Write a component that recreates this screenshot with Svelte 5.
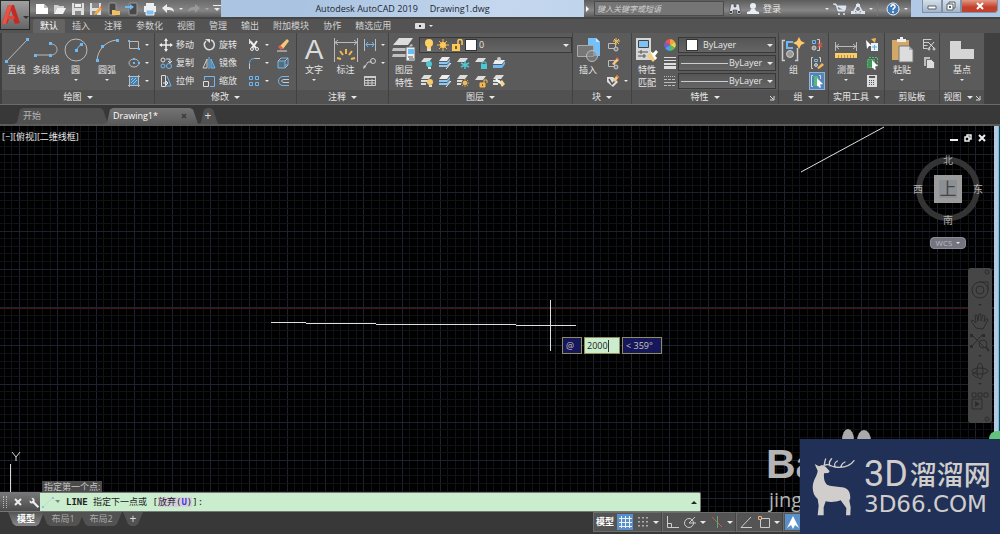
<script lang="ts">
  const icons: Record<string, string> = {
    // quick access bar
    fresh: '<path d="M1 2h8l4 4v6H1z" fill="#fff"/><path d="M9 2v4h4" fill="#bbb"/>',
    open: '<path d="M1 12V3h4l1 1h5v2H4z" fill="#d0d0d0"/><path d="M4 6h9l-3 6H1z" fill="#f2f2f2"/>',
    save: '<path d="M1 1h12v12H1z" fill="#dedede"/><path d="M3 1h8v5H3zM4 9h6v4H4z" fill="#888"/><path d="M4 2h6v3H4z" fill="#eee"/>',
    saveas: '<path d="M1 1h11v12H1z" fill="#dedede"/><path d="M3 1h7v5H3zM3 9h5v4H3z" fill="#888"/><path d="m5 13 1-3 5-5 2 2-5 5z" fill="#f0a848"/><path d="m11 5 1-1 2 2-1 1z" fill="#e65a3d"/>',
    phone: '<rect x="2" y="1" width="7" height="12" rx="1" fill="#494949" stroke="#999"/><path d="M5 8h3l1 1h4v4H5z" fill="#f2c063"/>',
    mobile: '<rect x="4" y="1" width="8" height="12" rx="1" fill="#494949" stroke="#999"/><path d="M0 4h5V2l4 3-4 3V6H0z" fill="#6cb9f5"/>',
    print: '<path d="M3 1h8v3H3zM1 4h12v6H1z" fill="#eee"/><path d="M3 8h8v5H3z" fill="#7cc1f5" stroke="#eee"/>',
    undo: '<path d="M1 6l5-4v3c4 0 7 1 7 5-2-2-4-2-7-2v3z" fill="#ececec"/>',
    redo: '<path d="M13 6L8 2v3c-4 0-7 1-7 5 2-2 4-2 7-2v3z" fill="#999"/>',
    find: '<path d="M3 2h3v3h2V2h3l2 10H9V8H5v4H1z" fill="#dde4ec" stroke="#333" stroke-width=".5"/><path d="M2 9h2v2H2zM10 9h2v2h-2z" fill="#444"/>',
    user: '<circle cx="7" cy="4" r="3" fill="#e8eef5"/><path d="M5 7h4l1 2 3 1v2H1v-2l3-1z" fill="#e8eef5"/>',
    cart: '<path d="M0 2h3l2 7h7M4 4h9l-1 4H5z" fill="#dce6f2" stroke="#dce6f2"/><circle cx="6" cy="12" r="1" fill="#dce6f2"/><circle cx="11" cy="12" r="1" fill="#dce6f2"/>',
    exchange: '<path d="M7 2L12 11H2zM4 8l3 2 3-2" fill="none" stroke="#dce6f2" stroke-width="1.500"/><path d="M5 2h4v3H5zM0 9h4v3H0zM10 9h4v3h-4z" fill="#dce6f2"/>',
    help: '<circle cx="7" cy="7" r="6" fill="#4279b7" stroke="#e9f2fb"/><path d="M5 5c0-3 4-3 4 0 0 1-2 1-2 3M7 9v2" fill="none" stroke="#fff" stroke-width="1.500"/>',
    // draw
    line: '<path d="M2 25L24 2" stroke="#bbb"/><path d="M1 23h3v3H1zM22 1h3v3h-3z" fill="#6cb9f5"/>',
    pline: '<path d="M3 18H18c8 0 8-11 0-11" fill="none" stroke="#bbb"/><path d="M1 17h3v3H1zM16 17h3v3h-3zM16 5h3v3h-3z" fill="#6cb9f5"/>',
    circle: '<circle cx="13" cy="13" r="11" fill="none" stroke="#bbb"/><path d="M13 13l5-6" stroke="#6cb9f5"/><path d="M12 12h3v3h-3zM17 6h3v3h-3z" fill="#6cb9f5"/>',
    arc: '<path d="M3 23C4 12 12 4 23 3" fill="none" stroke="#bbb"/><path d="M2 22h3v3H2zM7 8h3v3H7zM22 2h3v3h-3z" fill="#6cb9f5"/>',
    rect: '<path d="M2.500 3.500h9v7h-9z" fill="none" stroke="#bbb"/><path d="M1 2h2v2H1zM11 10h2v2h-2z" fill="#6cb9f5"/>',
    ellipse: '<ellipse cx="7" cy="7" rx="5" ry="4" fill="none" stroke="#bbb"/><path d="M6 6h2v2H6zM6 2h2v2H6zM11 6h2v2h-2z" fill="#6cb9f5"/>',
    hatch: '<path d="M3 3h8v8H3z" fill="#477fab"/><path d="M4 6l2-2M4 9l5-5M6 10l4-4" stroke="#8ec5ee"/><path d="M2.500 1v12M11.500 1v12M1 2.500h12M1 11.500h12" stroke="#bbb"/>',
    // modify
    move: '<path d="M7 1v12M1 7h12" stroke="#eee" stroke-width="1.500"/><path d="M7 0l2 3H5zM7 14l2-3H5zM0 7l3-2v4zM14 7l-3-2v4z" fill="#eee"/>',
    rotate: '<path d="M9 2a5 5 0 1 1-5 1" fill="none" stroke="#ddd" stroke-width="1.500"/><path d="M3 1h5v4z" fill="#ddd"/>',
    copy: '<circle cx="4" cy="4" r="2" fill="none" stroke="#ddd"/><circle cx="4" cy="10" r="2" fill="none" stroke="#6cb9f5"/><circle cx="10" cy="10" r="2.500" fill="none" stroke="#6cb9f5"/><path d="M7 3h4v3M9 5l2 2 2-2" fill="none" stroke="#ddd"/>',
    mirror: '<path d="M5 3v9H1z" fill="none" stroke="#ccc"/><path d="M9 3v9h4z" fill="#477fab" stroke="#6cb9f5"/><path d="M7 1v12" stroke="#6cb9f5"/>',
    stretch: '<path d="M2.500 1.500h4v11h-4z" fill="none" stroke="#ddd"/><path d="M8 2l4 10H7" fill="none" stroke="#6cb9f5"/><path d="M4 9h5M7 7l2 2-2 2" fill="none" stroke="#eee"/>',
    scale: '<path d="M2.500 6V2.500h10v10H8" fill="none" stroke="#6cb9f5"/><path d="M1.500 7.500h5v5h-5z" fill="none" stroke="#ddd"/>',
    trim: '<path d="M3 3l6 7M10 3L5 10" stroke="#eee" stroke-width="2"/><path d="M2.500 1v5" stroke="#ddd"/><circle cx="10" cy="11" r="1.500" fill="none" stroke="#eee"/><circle cx="5" cy="11" r="1.500" fill="none" stroke="#eee"/>',
    fillet: '<path d="M2.500 13V8" stroke="#ccc"/><path d="M2.500 8c0-4 2-5.500 5.500-5.500" fill="none" stroke="#6cb9f5"/><path d="M8 2.500h5" stroke="#ccc"/>',
    array: '<path d="M2.500 2.500h3v3h-3zM8.500 2.500h3v3h-3zM2.500 8.500h3v3h-3zM8.500 8.500h3v3h-3z" fill="none" stroke="#6cb9f5"/>',
    erase: '<path d="M4 8l7-7 2 2-6 8z" fill="#f5c978"/><path d="M2 9l2-2 3 3-2 2z" fill="#e85d4a"/><path d="M1 13h10" stroke="#ddd"/>',
    box: '<path d="M5 2h7v7H9" fill="none" stroke="#6cb9f5"/><path d="M2 5h7v7H2z" fill="#596c79" stroke="#6cb9f5"/><path d="M2 5l3-3M9 5l3-3M9 12l3-3" stroke="#bbb" fill="none"/>',
    offset: '<path d="M13 2.500H7c-6 0-6 9 0 9h6" fill="none" stroke="#6cb9f5"/><path d="M13 5.500H8c-3 0-3 3 0 3h5" fill="none" stroke="#ccc"/>',
    // annotation
    dim: '<path d="M1.500 1v24M24.500 1v24M2 5.500h22M5 3L2 5.500 5 8M21 3l3 2.500L21 8" fill="none" stroke="#bbb"/><path d="M13 12v5M7 14l3 4M19 14l-3 4M4 21l4 1M22 21l-4 1" stroke="#f2b850" stroke-width="2"/>',
    linear: '<path d="M1.500 1v12M12.500 1v12" stroke="#bbb"/><path d="M3 6.500h8M5 4L3 6.500 5 9M9 4l2 2.500L9 9" fill="none" stroke="#6cb9f5"/>',
    leader: '<path d="M1 12l4-6h4" fill="none" stroke="#ccc"/><circle cx="10" cy="5" r="2.500" fill="none" stroke="#ccc"/><path d="M0 13l1-4 2 2z" fill="#ccc"/>',
    table: '<path d="M1.500 2.500h11v9h-11zM1 6.500h12M1 9h12M5 5v7M9 5v7" fill="none" stroke="#ccc"/><path d="M1 2h12v2H1z" fill="#ccc"/>',
    // layers
    layers: '<path d="M8 1h14l-5 7H2z" fill="#ddd"/><path d="M2 11h15l3-4 2 1-5 6H1zM2 17h15l2-3 2 1-4 5H1z" fill="#c0c0c0"/><path d="M15 10h9v14h-9z" fill="#eee" stroke="#666"/><path d="M17 12h6v5h-6z" fill="#69bdf8"/><path d="M17 20h5M18 22h5" stroke="#555"/>',
    lay1: '<path d="M4 2h8L9 6H1z" fill="#ddd"/><circle cx="9" cy="8" r="3" fill="#4cc8d8"/><path d="M8 11h3v2H8z" fill="#ddd"/>',
    lay2: '<path d="M4 1h8L9 5H1z" fill="#eee"/><path d="M1 6h8l3-3v2L9 8H1zM1 9h8l3-3v2l-3 3H1z" fill="#8cc8f4"/><path d="M8 13l5-6" stroke="#eee"/>',
    lay3: '<path d="M4 2h8L9 6H1z" fill="#ddd"/><path d="M9 5v8M5 7l8 4M13 7l-8 4" stroke="#4cc8d8" stroke-width="1.500"/>',
    lay4: '<path d="M4 2h8L9 6H1z" fill="#ddd"/><path d="M7 8h6v5H7z" fill="#4cc8d8"/><path d="M8 8V6h4v2" fill="none" stroke="#4cc8d8"/>',
    lay5: '<path d="M3 4h10l-3 4H1z" fill="#eee"/><path d="M1 9h9l3-4v3l-3 4H1z" fill="#6cb9f5"/><circle cx="7" cy="3" r="2" fill="#ccc"/>',
    lay6: '<path d="M4 1h8L9 5H1zM1 6h7v2H1zM1 9h5v2H1z" fill="#ddd"/><circle cx="10" cy="8" r="3" fill="#f7ca67"/><path d="M9 11h3v2H9z" fill="#ddd"/>',
    lay8: '<path d="M4 1h8L9 5H1zM1 6h5v2H1zM1 9h4v2H1z" fill="#ddd"/><circle cx="9" cy="9" r="2" fill="#f7ca67"/><path d="M9 5v8M5 9h8M6 6l6 6M12 6l-6 6" stroke="#f2b850" stroke-width=".7"/>',
    lay9: '<path d="M4 2h8L9 6H1z" fill="#ddd"/><path d="M6 9h5v4H6z" fill="#f7b84c" stroke="#f7b84c"/><path d="M10 9V6h3v3" fill="none" stroke="#f7b84c"/><path d="M8 10h1v2H8z" fill="#7a5e24"/>',
    lay10: '<path d="M4 1h8L9 5H1zM1 6h7v2H1zM1 9h5v2H1z" fill="#ddd"/><path d="M7 8l3-2 3 4-3 3z" fill="#f4d79a"/><path d="M4 5l4 4" stroke="#fff" stroke-width="2"/>',
    bulb: '<circle cx="7" cy="5" r="4" fill="#ffd166"/><path d="M5 8h4v3H5z" fill="#ffd166"/><path d="M5 12h4" stroke="#ddd" stroke-width="2"/>',
    sun: '<path d="M7 1v12M1 7h12M3 3l8 8M11 3l-8 8" stroke="#f2b850"/><circle cx="7" cy="7" r="3" fill="#ffc95a"/>',
    unlock: '<path d="M2 6h8v7H2z" fill="#ffc95a"/><path d="M8 6V3c0-2 4-2 4 0v4" fill="none" stroke="#ffc95a" stroke-width="1.500"/><path d="M5 8h2v3H5z" fill="#7a5e24"/>',
    // block
    insert: '<path d="M13 1h8l4 4v14H13z" fill="#74c0fa"/><path d="M21 1v4h4" fill="#c3e4ff"/><path d="M2.500 8.500h16v11h-16z" fill="#777" stroke="#aaa"/><circle cx="17" cy="19" r="5.500" fill="#8888" stroke="#bbb"/>',
    blk1: '<path d="M2.500 5.500h7v5h-7z" fill="none" stroke="#bbb"/><circle cx="10" cy="11" r="2" fill="#777" stroke="#ccc"/><path d="M10 0v7M7 3h7M8 1l5 5M13 1L8 6" stroke="#f7c262"/>',
    blk2: '<path d="M2.500 4.500h6v6h-6z" fill="none" stroke="#bbb"/><circle cx="10" cy="11" r="2" fill="#777" stroke="#ccc"/><path d="M6 8l5-6 2 2-5 5z" fill="#f5c978"/><path d="M10 2l1-1 2 2-1 1z" fill="#e85d4a"/>',
    blk3: '<path d="M1 3h6l5 5-5 5-6-5z" fill="#ddd"/><path d="M3 5l3 5 3-3" fill="none" stroke="#555" stroke-width="1.500"/><path d="M7 6l4-5 2 2-4 5z" fill="#f5c978"/><path d="M10 2l1-1 2 2-1 1z" fill="#e85d4a"/>',
    // properties
    match: '<path d="M2 1h15v22H2z" fill="#d6d6d6"/><path d="M4.500 3.500h10v7h-10z" fill="#7cc4f7" stroke="#444"/><path d="M4 15h10M4 19h8M7 13v4M10 17v4" stroke="#555"/><path d="M13 19l4-4 6 6-4 4z" fill="#f3cf7d"/><path d="M16 14l3 2 3-3 2 2-3 4 2 2-2 2z" fill="#fff"/>',
    wheel: '<path d="M7 7V1a6 6 0 0 1 5 3z" fill="#f7a13b"/><path d="M7 7l5-3a6 6 0 0 1 0 6z" fill="#e9d44a"/><path d="M7 7l5 3a6 6 0 0 1-5 3z" fill="#59b95f"/><path d="M7 7v6a6 6 0 0 1-5-3z" fill="#42a5e8"/><path d="M7 7l-5 3a6 6 0 0 1 0-6z" fill="#7562c9"/><path d="M7 7L2 4a6 6 0 0 1 5-3z" fill="#e8515d"/>',
    weight: '<path d="M1 1.500h12M1 4.500h12" stroke="#ddd"/><path d="M1 8h12" stroke="#ddd" stroke-width="2"/><path d="M1 11.500h12" stroke="#ddd" stroke-width="3"/>',
    ltype: '<path d="M1 2.500h12" stroke="#bbb" stroke-dasharray="1 1"/><path d="M1 5.500h12M1 11.500h12" stroke="#bbb" stroke-dasharray="3 1"/><path d="M1 8.500h12" stroke="#bbb"/>',
    // group, utilities, clipboard, view
    group: '<path d="M4 3.500H1.500v20H4M14 23.500h2.500V11" fill="none" stroke="#ccc" stroke-width="1.500"/><path d="M12 5H6v6h6" fill="none" stroke="#6cb9f5" stroke-width="2"/><circle cx="9" cy="17" r="3.500" fill="#999" stroke="#ccc"/><path d="M18 0l2 4 4 2-4 2-2 4-2-4-4-2 4-2z" fill="#ffc96b"/>',
    grp1: '<path d="M2.500 2.500h3v3h-3z" fill="none" stroke="#6cb9f5"/><circle cx="4" cy="10" r="2" fill="#999" stroke="#ccc"/><path d="M7 1.500h2.500v11H7" fill="none" stroke="#ccc"/><path d="M8 5l4 4M12 5L8 9" stroke="#e84f45" stroke-width="1.500"/>',
    grp2: '<path d="M3 1.500H1.500v11H3M9 1.500h1.500V6" fill="none" stroke="#ccc"/><path d="M4.500 3.500h3v2h-3z" fill="none" stroke="#6cb9f5"/><circle cx="6" cy="9" r="1.500" fill="#999" stroke="#ccc"/><path d="M7 12l5-5 2 2-5 4z" fill="#f5b65c"/>',
    grp3: '<path d="M3 1.500H1.500v11H3M9 1.500h1.500V5" fill="none" stroke="#ddd"/><path d="M4 2h4v10H4z" fill="#53b981"/><path d="M7 4l6 6-3 .5 1 3h-2l-1-2-1 1z" fill="#fff"/>',
    measure: '<path d="M2.500 5v9M23.500 5v9M3 9.500h20M6 7L3 9.500 6 12M20 7l3 2.500-3 2.500" fill="none" stroke="#bbb"/><path d="M2 16h22v5H2z" fill="#f8cd6a"/><path d="M5.500 18v3M8.500 18v3M11.500 18v3M14.500 18v3M17.500 18v3M20.500 18v3" stroke="#b4914a"/>',
    ut1: '<path d="M6 5h7v8H6z" fill="#e8f2fa"/><path d="M7 9h5M9.500 7v5" stroke="#5caee9"/><path d="M1 2l6 6H4l-2 3z" fill="#fff"/><path d="M6 1l5-1-1 5z" fill="#f5b850"/>',
    ut2: '<path d="M4 1.500h8.500V10" fill="none" stroke="#55bf72" stroke-dasharray="2 1"/><path d="M2.500 3.500h7v8h-7z" fill="#3e9557" stroke="#55bf72" stroke-dasharray="2 1"/><path d="M7 4l6 6-3 .5 1 3H9l-1-2-1 1z" fill="#fff"/>',
    calc: '<path d="M2 1h10v12H2z" fill="#ddd"/><path d="M4 3h6" stroke="#555" stroke-width="2"/><path d="M4 6.500h6M4 8.500h6M4 10.500h6" stroke="#555" stroke-dasharray="1 1"/>',
    paste: '<path d="M3 3h17v20H3z" fill="#d3a768"/><path d="M8 5V2h3V0h3v2h3v3z" fill="#eee"/><path d="M10 9h10l4 4v12H10z" fill="#ddd" stroke="#777"/><path d="M20 9v4h4" fill="#aaa"/>',
    cut: '<path d="M1.500 1.500h8M1.500 4.500h5M1.500 7.500h4M1.500 10.500h4M1.500 1v10" stroke="#ccc"/><path d="M6 4l6 6M12 4L7 10" stroke="#ddd"/><circle cx="12" cy="11" r="1" fill="none" stroke="#ddd"/><circle cx="7" cy="11" r="1" fill="none" stroke="#ddd"/>',
    clip: '<path d="M2 1h6v9H2z" fill="#bbb"/><path d="M4.500 3.500h5l3 3v6h-8z" fill="#ddd" stroke="#666"/>',
    base: '<path d="M1 4h11v8h13v10H1z" fill="#d5d5d5"/>',
    // status bar
    grid: '<path d="M3.500 1v12M7.500 1v12M11.500 1v12M1 3.500h13M1 7.500h13M1 11.500h13" stroke="#e6f1fa"/>',
    dots: '<path d="M3 2v10M7 2v10M11 2v10" stroke="#ccc" stroke-width="1.500" stroke-dasharray="1.500 2.500"/>',
    ortho: '<path d="M2.500 1v11.500H14M2 8.500h4.500V12" fill="none" stroke="#ccc"/>',
    polar: '<circle cx="6" cy="8" r="4.500" fill="none" stroke="#ccc"/><path d="M6 8l6-6M6 8h7" stroke="#ccc"/>',
    iso: '<path d="M2 2l10 10" stroke="#cf5b55"/><path d="M7.500 1v12" stroke="#58ad70"/>',
    angle: '<path d="M12 2L2 12.500h11" fill="none" stroke="#ccc"/>',
    osnap: '<path d="M3.500 3.500h9v9h-9z" fill="none" stroke="#ccc"/><path d="M1.500 1.500h3v3h-3z" fill="#5b5b5b" stroke="#e8b084"/>',
    person: '<path d="M7 1l2 4 4 8-4-3-2 4-2-4-4 3 4-8z" fill="#fff"/>',
    wrench: '<path d="M3 1l2 3-2 2-2-2c-1 3 1 5 4 4l6 6 2-2-6-6c1-3-1-5-4-5z" fill="#eee"/>',
  };

  const menus = ["默认", "插入", "注释", "参数化", "视图", "管理", "输出", "附加模块", "协作", "精选应用"];
  const drawTools = [
    { icon: "line", label: "直线", cls: "w29", more: false },
    { icon: "pline", label: "多段线", cls: "w30", more: false },
    { icon: "circle", label: "圆", cls: "w29", more: true },
    { icon: "arc", label: "圆弧", cls: "w34", more: true },
  ];
  const modifyTools = [
    ["move", "移动"], ["rotate", "旋转"],
    ["copy", "复制"], ["mirror", "镜像"],
    ["stretch", "拉伸"], ["scale", "缩放"],
  ];
  const layerTools = ["lay1", "lay2", "lay3", "lay4", "lay5", "lay6", "lay2", "lay8", "lay9", "lay10"];
  const quick = ["fresh", "open", "save", "saveas", "phone", "mobile", "print"];

  // drawing grid: one heavy line for every five light ones
  const step = 7.65;
  const cols = Array.from({ length: 320 }, (_, i) => ({ at: Math.round(19 + step * (i - 2)) + 0.5, major: (i - 2) % 5 === 0 }));
  const rows = Array.from({ length: 180 }, (_, i) => ({ at: Math.round(28 + step * (i - 3)) + 0.5, major: (i - 3) % 5 === 0 }));

  let search = $state("");
  let command = $state("");
  let distance = $state("2000");
  let angle = $state("< 359°");
</script>

{#snippet icon(name: string, size = 14)}
  <svg class="icon" width={size} height={size} viewBox="0 0 {size} {size}" aria-hidden="true">{@html icons[name]}</svg>
{/snippet}

{#snippet big(name: string, label: string, cls: string, more = false)}
  <button class="big {cls}">
    {@render icon(name, 26)}
    <span>{label}</span>
    {#if more}<i class="arrow small"></i>{/if}
  </button>
{/snippet}

{#snippet stack(names: string[], arrows: boolean[] = [])}
  <div class="stack">
    {#each names as name, i}
      <button class="tool" class:picked={name === "grp3"} aria-label={name}>
        {@render icon(name)}
        {#if arrows[i]}<i class="arrow small"></i>{/if}
      </button>
    {/each}
  </div>
{/snippet}

{#snippet panelTitle(label: string, arrow = true, corner = false)}
  <button class="panel-title">
    {label}
    {#if arrow}<i class="arrow"></i>{/if}
    {#if corner}<svg class="corner" width="6" height="6" viewBox="0 0 6 6"><path d="M1 1l3 3M5 1v4H1" fill="none" stroke="#ddd" /></svg>{/if}
  </button>
{/snippet}

<div class="app">
  <header class="titlebar">
    <button class="logo" aria-label="AutoCAD">
      <svg width="20" height="22" viewBox="0 0 20 22">
        <path d="M1 20L7 1h6l6 18-5 1-2-5H8l-2 5z" fill="#c22a26" />
        <path d="M7 1h4L5 20H1z" fill="#e65246" />
        <path d="M10 6l2 6H8z" fill="#8a8a8a" />
        <path d="M7 12h6l1 3H6z" fill="#e04237" />
      </svg>
      <i class="arrow"></i>
    </button>
    <div class="quick">
      {#each quick as name}
        <button aria-label={name}>{@render icon(name)}</button>
      {/each}
      <button class="drop" aria-label="undo">{@render icon("undo")}<i class="arrow small"></i></button>
      <button class="drop dim" aria-label="redo">{@render icon("redo")}<i class="arrow small"></i></button>
      <button class="custom" aria-label="customize"><i class="arrow"></i></button>
    </div>
    <h1><span>Autodesk AutoCAD 2019</span><span>Drawing1.dwg</span></h1>
    <div class="infobar">
      <button class="expand" aria-label="expand"><i class="arrow right"></i></button>
      <input type="search" bind:value={search} placeholder="键入关键字或短语" aria-label="键入关键字或短语" />
      <button aria-label="find">{@render icon("find")}</button>
      <button class="login">{@render icon("user")}<span>登录</span><i class="arrow small"></i></button>
      <button aria-label="cart">{@render icon("cart")}</button>
      <button class="drop" aria-label="exchange">{@render icon("exchange")}<i class="arrow small"></i></button>
      <button class="drop help" aria-label="help">{@render icon("help")}<i class="arrow small"></i></button>
    </div>
    <div class="window">
      <button aria-label="minimize"><svg width="10" height="8" viewBox="0 0 10 8"><path d="M1 4h8v3H1z" fill="#fff" stroke="#57606b" /></svg></button>
      <button aria-label="restore"><svg width="10" height="10" viewBox="0 0 10 10"><path d="M3 1h6v6H3z" fill="#eee" stroke="#57606b" /><path d="M1 3h6v6H1z" fill="#fff" stroke="#57606b" /><path d="M3 5h2v2H3z" fill="#57606b" /></svg></button>
      <button class="close" aria-label="close"><svg width="10" height="8" viewBox="0 0 10 8"><path d="M2 1l6 6M8 1L2 7" stroke="#fff" stroke-width="2" /></svg></button>
    </div>
  </header>

  <nav class="menus">
    {#each menus as menu, i}
      <button class:active={i === 0}>{menu}</button>
    {/each}
    <button class="toggle" aria-label="ribbon"><b></b><i class="arrow small"></i></button>
  </nav>

  <div class="ribbon">
    <section class="p-draw">
      <div class="body">
        {#each drawTools as t}{@render big(t.icon, t.label, t.cls, t.more)}{/each}
        {@render stack(["rect", "ellipse", "hatch"], [true, true, true])}
      </div>
      {@render panelTitle("绘图")}
    </section>
    <section class="p-modify">
      <div class="body">
        <div class="named">
          {#each modifyTools as [name, label]}
            <button class="tool">{@render icon(name)}<span>{label}</span></button>
          {/each}
        </div>
        {@render stack(["trim", "fillet", "array"], [true, true, true])}
        {@render stack(["erase", "box", "offset"])}
      </div>
      {@render panelTitle("修改")}
    </section>
    <section class="p-note">
      <div class="body">
        <button class="big w34"><b class="letter">A</b><span>文字</span><i class="arrow small"></i></button>
        {@render big("dim", "标注", "w29")}
        {@render stack(["linear", "leader", "table"], [true, true])}
      </div>
      {@render panelTitle("注释")}
    </section>
    <section class="p-layer">
      <div class="body">
        {@render big("layers", "图层 特性", "w30")}
        <div class="layer-side">
          <div class="combo layer">
            <span class="deco">{@render icon("bulb")}{@render icon("sun")}{@render icon("unlock")}<b class="swatch"></b></span>
            <select aria-label="图层"><option>0</option></select>
            <i class="arrow"></i>
          </div>
          <div class="layer-grid">
            {#each layerTools as name}
              <button class="tool" aria-label={name}>{@render icon(name)}</button>
            {/each}
          </div>
        </div>
      </div>
      {@render panelTitle("图层")}
    </section>
    <section class="p-block">
      <div class="body">
        {@render big("insert", "插入", "w30")}
        {@render stack(["blk1", "blk2", "blk3"], [false, false, true])}
      </div>
      {@render panelTitle("块")}
    </section>
    <section class="p-props">
      <div class="body">
        {@render big("match", "特性 匹配", "w30")}
        {@render stack(["wheel", "weight", "ltype"])}
        <div class="combos">
          <div class="combo color"><span class="deco"><b class="swatch"></b></span><select aria-label="颜色"><option>ByLayer</option></select><i class="arrow"></i></div>
          <div class="combo wide"><span class="deco"><b class="rule"></b></span><select aria-label="线宽"><option>ByLayer</option></select><i class="arrow"></i></div>
          <div class="combo wide"><span class="deco"><b class="rule"></b></span><select aria-label="线型"><option>ByLayer</option></select><i class="arrow"></i></div>
        </div>
      </div>
      {@render panelTitle("特性", true, true)}
    </section>
    <section class="p-group">
      <div class="body">
        {@render big("group", "组", "w29")}
        {@render stack(["grp1", "grp2", "grp3"])}
      </div>
      {@render panelTitle("组")}
    </section>
    <section class="p-util">
      <div class="body">
        {@render big("measure", "测量", "w34", true)}
        {@render stack(["ut1", "ut2", "calc"])}
      </div>
      {@render panelTitle("实用工具")}
    </section>
    <section class="p-clip">
      <div class="body">
        {@render big("paste", "粘贴", "w34", true)}
        {@render stack(["cut", "clip"])}
      </div>
      {@render panelTitle("剪贴板", false)}
    </section>
    <section class="p-view">
      <div class="body">{@render big("base", "基点", "full", true)}</div>
      {@render panelTitle("视图", true, true)}
    </section>
  </div>

  <div class="files">
    <button class="file start">开始</button>
    <button class="file current"><span>Drawing1*</span><svg width="6" height="6" viewBox="0 0 6 6"><path d="M1 1l4 4M5 1L1 5" stroke="#3a3a3a" stroke-width="1.500" /></svg></button>
    <button class="file add" aria-label="new">+</button>
  </div>

  <main>
    <svg class="drawing" width="100%" height="100%" aria-hidden="true">
      {#each cols as c}<line x1={c.at} x2={c.at} y1="0" y2="100%" stroke={c.major ? "#1e2130" : "#101217"} />{/each}
      {#each rows as r}<line y1={r.at} y2={r.at} x1="0" x2="100%" stroke={r.major ? "#1e2130" : "#101217"} />{/each}
      <path d="M0 182.500H3000" stroke="#461416" />
      <path d="M271 196.500h35M306 197.500h70M376 198.500h70M446 198.500h70M516 199.500h60M550.500 174v51M801 46L884 1" stroke="#dedede" fill="none" />
      <path d="M10.500 338v40M12 326l4 5 4-5M16 331v4" stroke="#d8d8d8" fill="none" />
    </svg>

    <div class="view-label">[−][俯视][二维线框]</div>

    <div class="dyn">
      <span>@</span>
      <div class="dist"><input bind:value={distance} aria-label="距离" /><i></i></div>
      <input class="ang" bind:value={angle} aria-label="角度" />
    </div>

    <div class="doc-controls">
      <button aria-label="minimize"><svg width="8" height="8" viewBox="0 0 8 8"><path d="M0 6h8" stroke="#eee" stroke-width="2" /></svg></button>
      <button aria-label="restore"><svg width="8" height="8" viewBox="0 0 8 8"><path d="M3 3V1h4v4H5M1 3h4v4H1z" fill="none" stroke="#eee" stroke-width="1.500" /></svg></button>
      <button aria-label="close"><svg width="8" height="8" viewBox="0 0 8 8"><path d="M1 1l6 6M7 1L1 7" stroke="#eee" stroke-width="2" /></svg></button>
    </div>

    <svg class="cube" width="76" height="76" viewBox="0 0 76 76">
      <circle cx="38" cy="38" r="29" fill="none" stroke="#343434" stroke-width="6" />
      <path d="M24 24h28v28H24z" fill="#9b9b9b" />
      <path d="M29 29h18v18H29z" fill="#8c8f94" />
      <g text-anchor="middle">
        <text class="top" x="38" y="44">上</text>
        <text x="38" y="13">北</text><text x="38" y="73">南</text><text x="8" y="42">西</text><text x="68" y="42">东</text>
      </g>
    </svg>
    <button class="wcs">WCS <i class="arrow small"></i></button>

    <svg class="navbar" width="24" height="155" viewBox="0 0 24 155">
      <rect width="24" height="155" rx="3" fill="#464646" />
      <g fill="none" stroke="#2c2c2c">
        <circle cx="19" cy="4" r="2" /><circle cx="19" cy="151" r="2" />
        <circle cx="12" cy="22" r="8" /><circle cx="12" cy="22" r="4" /><path d="M12 14h8v8" />
        <path d="M8 60l-5-7 2-1 3 3-1-8h2l1 6 1-7h2v7l2-6 2 1-1 6 3-4 1 2-5 9z" />
        <path d="M4 67l12 12M14 67L4 78" /><circle cx="15" cy="76" r="4" /><path d="M18 79l3 4" stroke-width="2" />
        <ellipse cx="12" cy="103" rx="8" ry="3" /><ellipse cx="12" cy="103" rx="3" ry="8" /><path d="M4 106l5 4M4 106l5-3" />
        <path d="M4 125h4v4H4zM10 125h4v4h-4zM16 125h4v4h-4zM4 131h10v10H4z" />
      </g>
      <path d="M7 133l5 3-5 3zM10 36h4l-2 2zM10 87h4l-2 2zM10 115h4l-2 2zM2 66h3v3H2zM14 66h3v3h-3zM2 77h3v3H2z" fill="#2c2c2c" />
    </svg>

    <div class="history">指定第一个点:</div>
    <form class="command" onsubmit={(e) => e.preventDefault()}>
      <div class="handle">
        <b class="grip"></b>
        <button type="button" aria-label="close"><svg width="8" height="8" viewBox="0 0 8 8"><path d="M1 1l6 6M7 1L1 7" stroke="#eee" stroke-width="2" /></svg></button>
        <button type="button" aria-label="settings"><svg width="11" height="11" viewBox="0 0 14 14">{@html icons.wrench}</svg></button>
      </div>
      <svg width="20" height="14" viewBox="0 0 20 14"><path d="M3 12L12 3" stroke="#c5d8d0" /><path d="M2 11h2v2H2zM12 2h2v2h-2z" fill="#8ac4ee" /><path d="M15 5h5l-2 3z" fill="#7a8a7e" /></svg>
      <label for="cmd"><b>LINE</b> 指定下一点或 [<mark>放弃(<b>U</b>)</mark>]:</label>
      <input id="cmd" bind:value={command} autocomplete="off" />
      <i class="arrow up"></i>
    </form>
  </main>

  <footer>
    <button class="layout on">模型</button>
    <button class="layout">布局1</button>
    <button class="layout">布局2</button>
    <button class="layout plus" aria-label="new layout">+</button>
    <div class="status">
      <div class="cell">
        <button class="model">模型</button>
        <button class="lit" aria-label="grid">{@render icon("grid")}</button>
        <button aria-label="snap">{@render icon("dots")}<i class="arrow"></i></button>
      </div>
      <div class="cell">
        <button aria-label="ortho">{@render icon("ortho")}</button>
        <button aria-label="polar">{@render icon("polar")}<i class="arrow"></i></button>
        <button aria-label="isodraft">{@render icon("iso")}<i class="arrow"></i></button>
      </div>
      <div class="cell">
        <button aria-label="tracking">{@render icon("angle")}</button>
        <button aria-label="object snap">{@render icon("osnap")}<i class="arrow"></i></button>
      </div>
      <div class="cell"><button class="lit" aria-label="annotation">{@render icon("person")}</button></div>
    </div>
  </footer>

  <div class="edge"></div>
  <svg class="paws" width="32" height="22" viewBox="0 0 32 22" aria-hidden="true">
    <ellipse cx="8" cy="12" rx="6" ry="11" fill="#aaa" />
    <ellipse cx="24" cy="13" rx="7" ry="11" fill="#aaa" />
  </svg>
  <div class="mark"><b>Ba</b><span>jing</span></div>
  <div class="brand">
    <svg width="46" height="62" viewBox="64 108 138 186" aria-hidden="true">
      <path d="M75 132l13 7 9-4 11 5 12 14-4 5-13 1c-1 14 0 24 9 34 10 5 26 5 45 8 14 2 22 9 24 22l1 10-3 8 4 20-1 24H169l1-22-17-23c-14 5-30 6-45 3l-6 18v24H84l3-29-3-20c-12-10-17-26-14-44 3-17 13-27 14-41z" fill="#d0cdcc" />
      <path d="M102 139c5-10 2-15 6-22M106 135c14-5 15 4 30 6 22 3 45-2 57-19M121 138c-6-10 0-16 5-22M137 141c-6-10 0-14 6-18M153 141c5-8 1-9 13-15" fill="none" stroke="#d0cdcc" stroke-width="4" stroke-linecap="round" />
    </svg>
    <div class="brand-text">
      <div class="brand-name">3D<span>溜溜网</span></div>
      <div class="brand-url">3D66.COM</div>
    </div>
  </div>
</div>

<style>
  :global(body) {
    background: #383838;
  }

  .app {
    position: relative;
    display: flex;
    flex-direction: column;
    min-height: 100vh;
    overflow: hidden;
    background: #383838;
    color: #e6e6e6;
    font: 9px/14px "Open Sans", "Noto Sans CJK SC", sans-serif;
  }

  button,
  input,
  select {
    margin: 0;
    padding: 0;
    border: 0;
    border-radius: 0;
    background: none;
    color: inherit;
    font: inherit;
  }

  button {
    display: flex;
    align-items: center;
    justify-content: center;
    white-space: nowrap;
  }

  svg {
    display: block;
    flex: none;
  }

  .arrow {
    flex: none;
    width: 0;
    height: 0;
    border: 3px solid transparent;
    border-top-color: #e8e8e8;
    border-bottom: 0;
  }

  .arrow.small {
    border-width: 2px;
    border-bottom: 0;
  }

  .arrow.right {
    border: 3px solid transparent;
    border-left-color: #fff;
    border-right: 0;
  }

  .arrow.up {
    border: 3px solid transparent;
    border-bottom-color: #222;
    border-top: 0;
  }

  .titlebar {
    display: flex;
    height: 17px;
    background: linear-gradient(100deg, #b3cae6, #a9c3e0 30%, #c4d7ee 50%, #adc6e4);
  }

  .logo {
    position: relative;
    z-index: 2;
    gap: 2px;
    width: 30px;
    height: 30px;
    border: 1px solid #292929;
    background: linear-gradient(#a0a0a0, #656565);
  }

  .logo .arrow {
    border-top-color: #333;
    margin-top: 4px;
  }

  .quick {
    display: flex;
    gap: 4px;
    align-items: center;
    width: 186px;
    padding-left: 5px;
    background: linear-gradient(#6a6a6a, #858585 60%, #5a5a5a);
  }

  .drop {
    gap: 4px;
  }

  .drop.dim .arrow {
    border-top-color: #aaa;
  }

  .custom {
    width: 10px;
    height: 7px;
    border-top: 1px solid #eee;
  }

  h1 {
    display: flex;
    flex: 1;
    gap: 12px;
    justify-content: center;
    margin: 0;
    color: #1d2630;
    font: 9px/17px "Open Sans", sans-serif;
    white-space: nowrap;
  }

  .infobar {
    display: flex;
    gap: 4px;
    align-items: center;
    width: 327px;
    background: linear-gradient(#5c5c5c, #868686 60%, #5a5a5a);
  }

  .infobar .expand {
    width: 6px;
    height: 17px;
    padding-left: 1px;
  }

  .infobar input {
    width: 130px;
    height: 15px;
    padding-left: 2px;
    border: 1px solid #4b4b4b;
    box-sizing: border-box;
    background: #757575;
    font-size: 8px;
    font-style: italic;
  }

  .infobar input::placeholder {
    color: #d0d0d0;
  }

  .infobar .login {
    flex: 1;
    gap: 3px;
  }

  .login .arrow {
    margin-left: auto;
  }

  .infobar .help {
    padding: 0 3px 0 8px;
    border-left: 1px solid #777;
  }

  .window {
    display: flex;
    width: 89px;
    height: 13px;
    padding: 0 2px 0 11px;
    box-sizing: border-box;
  }

  .window button {
    flex: 1;
    border: 1px solid #8091a6;
    border-top: 0;
    background: linear-gradient(#d4dfeb, #a5b4c8);
  }

  .window .close {
    flex: 2;
    border-radius: 0 0 4px 0;
    background: linear-gradient(#e29a86, #c2402c 60%);
  }

  .menus {
    display: flex;
    height: 16px;
    padding-left: 33px;
    box-sizing: border-box;
    border-top: 2px solid #454545;
    background: #535353;
  }

  .menus button {
    padding: 0 7px;
    color: #d2d2d2;
  }

  .menus .active {
    border-radius: 2px 2px 0 0;
    background: #646464;
    color: #fff;
  }

  .menus .toggle {
    gap: 4px;
    margin-left: 10px;
  }

  .toggle b {
    width: 2px;
    height: 2px;
    border: solid #ddd;
    border-width: 2px 4px;
    border-radius: 1px;
    background: #333;
  }

  .ribbon {
    display: flex;
    height: 72px;
    padding-left: 2px;
    box-sizing: border-box;
    border-bottom: 1px solid #6a6a6a;
    background: #404040;
  }

  section {
    display: flex;
    flex: none;
    flex-direction: column;
    box-sizing: border-box;
    border-right: 1px solid #424242;
    background: #5b5b5b;
  }

  .p-draw { width: 153px; }
  .p-modify { width: 142px; }
  .p-note { width: 92px; }
  .p-layer { flex: 0 1 184px; }
  .p-block { width: 59px; }
  .p-props { flex: 0 1 147px; }
  .p-group { width: 50px; }
  .p-util { width: 56px; }
  .p-clip { width: 55px; }
  .p-view { width: 45px; }

  .body {
    display: flex;
    flex: 1;
    padding-top: 3px;
  }

  .panel-title {
    position: relative;
    gap: 5px;
    height: 14px;
    background: #515151;
  }

  .corner {
    position: absolute;
    right: 3px;
    bottom: 3px;
  }

  .p-view .panel-title {
    padding-right: 8px;
  }

  .big {
    flex: none;
    flex-direction: column;
    justify-content: flex-start;
    padding-top: 1px;
    line-height: 13px;
  }

  .big span {
    max-width: 28px;
    white-space: pre-wrap;
  }

  .big .arrow {
    margin-top: 3px;
  }

  .w29 { width: 29px; }
  .w30 { width: 30px; }
  .w34 { width: 34px; }
  .full { width: 100%; }

  .letter {
    height: 26px;
    color: #dcdcdc;
    font: 28px/26px "Liberation Sans", sans-serif;
  }

  .stack {
    display: grid;
    grid-template-rows: repeat(3, 18px);
    align-content: start;
    flex: none;
    padding-left: 2px;
  }

  .tool {
    justify-content: flex-start;
    gap: 4px;
    height: 18px;
    padding: 0 1px;
  }

  .picked {
    background: #5584b8;
    outline: 1px solid #8cb5df;
    outline-offset: -1px;
  }

  .named {
    display: grid;
    grid-template-columns: 43px 43px;
    align-content: start;
    padding-left: 3px;
  }

  .named .tool {
    gap: 3px;
  }

  .p-modify .stack + .stack {
    padding-left: 5px;
  }

  .p-util .stack,
  .p-group .stack {
    padding-left: 1px;
  }

  .layer-side {
    flex: 1;
  }

  .layer-grid {
    display: grid;
    grid-template-columns: repeat(5, 18px);
  }

  .combos {
    display: grid;
    grid-template-rows: repeat(3, 18px);
    align-content: start;
    flex: 1;
    min-width: 0;
    padding-right: 2px;
  }

  .p-props .stack {
    padding-left: 0;
  }

  .combo {
    position: relative;
    height: 16px;
    margin: 1px 0;
    box-sizing: border-box;
    border: 1px solid #393939;
    background: linear-gradient(#555, #656565);
  }

  .combo select {
    display: block;
    width: 100%;
    height: 14px;
    padding-left: 24px;
    appearance: none;
  }

  .combo .arrow {
    position: absolute;
    top: 6px;
    right: 2px;
    pointer-events: none;
  }

  .layer select {
    padding-left: 59px;
  }

  .wide select {
    padding-left: 50px;
  }

  .deco {
    position: absolute;
    inset: 0 auto 0 2px;
    display: flex;
    align-items: center;
    pointer-events: none;
  }

  .color .deco {
    left: 6px;
  }

  .swatch {
    width: 10px;
    height: 10px;
    margin-left: 1px;
    border: 1px solid #333;
    background: #fff;
  }

  .rule {
    width: 47px;
    height: 1px;
    background: #ccc;
  }

  .files {
    display: flex;
    align-items: flex-end;
    height: 21px;
    padding-left: 14px;
    box-sizing: border-box;
    border-bottom: 2px solid #5a5a5a;
    background: #383838;
  }

  .file {
    height: 16px;
    background: #505050;
    color: #b5b5b5;
    clip-path: polygon(0 100%, 3px 90%, 6px 10%, 9px 0, calc(100% - 8px) 0, calc(100% - 5px) 10%, 100% 100%);
  }

  .start {
    justify-content: flex-start;
    width: 94px;
    padding-left: 9px;
  }

  .current {
    justify-content: space-between;
    width: 94px;
    margin-left: -4px;
    padding: 0 11px 0 9px;
    background: linear-gradient(#747474, #5a5a5a);
    color: #fff;
  }

  .add {
    width: 20px;
    color: #ddd;
    font-size: 12px;
  }

  main {
    position: relative;
    flex: 1;
    min-height: 386px;
    background: #000;
  }

  .drawing {
    position: absolute;
    inset: 0;
  }

  .view-label {
    position: absolute;
    top: 4px;
    left: 2px;
  }

  .dyn {
    position: absolute;
    top: 211px;
    left: 562px;
    display: flex;
    gap: 2px;
    color: #c9c6b4;
  }

  .dyn > * {
    height: 17px;
    padding: 0 3px;
    box-sizing: border-box;
    border: 1px solid #8f8d5c;
    background: #16165c;
    line-height: 15px;
  }

  .dyn span {
    width: 20px;
  }

  .dyn .dist {
    display: flex;
    align-items: center;
    width: 36px;
    padding: 0 2px;
    background: #c9edcd;
    color: #222;
  }

  .dist input {
    width: 21px;
  }

  .dist i {
    width: 1px;
    height: 12px;
    background: #333;
  }

  .dyn .ang {
    width: 40px;
  }

  .doc-controls {
    position: absolute;
    top: 8px;
    right: 14px;
    display: flex;
    gap: 6px;
  }

  .cube {
    position: absolute;
    top: 25px;
    right: 14px;
    fill: #b0b0b0;
    font-size: 10px;
  }

  .cube .top {
    fill: #444;
    font-size: 17px;
  }

  .wcs {
    position: absolute;
    top: 111px;
    right: 34px;
    gap: 4px;
    width: 36px;
    height: 12px;
    border: 1px solid #8c8c98;
    border-radius: 4px;
    background: #74747e;
    color: #b9b9c4;
    font-size: 8px;
  }

  .navbar {
    position: absolute;
    top: 142px;
    right: 8px;
  }

  .history {
    position: absolute;
    bottom: 20px;
    left: 42px;
    padding: 0 2px;
    background: #4a4a4a;
    color: #c6c6c6;
    line-height: 11px;
  }

  .command {
    position: absolute;
    bottom: 0;
    left: 0;
    display: flex;
    align-items: center;
    width: 701px;
    height: 20px;
    box-sizing: border-box;
    border: 1px solid #777;
    border-left: 0;
    border-radius: 0 2px 2px 0;
    background: #c9edcd;
    color: #222;
    font-family: "DejaVu Sans Mono", "Noto Sans CJK SC", monospace;
  }

  .handle {
    display: flex;
    gap: 7px;
    align-items: center;
    align-self: stretch;
    width: 40px;
    padding-left: 3px;
    box-sizing: border-box;
    background: linear-gradient(#777, #4a4a4a);
  }

  .handle .grip {
    width: 2px;
    height: 12px;
    border: dotted #bbb;
    border-width: 0 1px;
  }

  .command label {
    padding-left: 6px;
    white-space: pre;
  }

  mark {
    background: #d5d0dc;
    color: inherit;
  }

  mark b {
    color: #3c3ce0;
  }

  .command input {
    flex: 1;
    min-width: 0;
    outline: 0;
  }

  .command .arrow {
    margin-right: 3px;
  }

  footer {
    display: flex;
    align-items: flex-start;
    height: 22px;
    padding-left: 8px;
    background: #383838;
  }

  .layout {
    width: 42px;
    height: 14px;
    margin-right: -4px;
    background: #525252;
    color: #aaa;
    clip-path: polygon(0 0, 100% 0, calc(100% - 5px) 85%, calc(100% - 8px) 100%, 8px 100%, 5px 85%);
  }

  .layout.on {
    width: 36px;
    margin-right: -2px;
    background: linear-gradient(#555, #888);
    color: #fff;
    font-weight: 700;
  }

  .layout.plus {
    width: 20px;
    margin-left: 5px;
    color: #ddd;
    font-size: 12px;
  }

  .status {
    display: flex;
    width: 407px;
    height: 20px;
    margin-left: auto;
    background: #545454;
  }

  .cell {
    display: flex;
    gap: 2px;
    align-items: center;
    padding: 0 1px;
    border: 1px solid #6c6c6c;
    border-right-color: #444;
  }

  .cell button {
    gap: 3px;
    height: 16px;
    padding: 0 1px;
  }

  .cell .model {
    padding: 0 1px;
    color: #fff;
    font-weight: 700;
  }

  .cell .lit {
    background: #5b8fc7;
  }

  .edge {
    position: absolute;
    top: 126px;
    right: 0;
    bottom: 0;
    width: 6px;
    box-sizing: border-box;
    border-right: 1px solid #26404f;
    background: linear-gradient(90deg, #b5cae3 4px, #5cc8e4 4px);
  }

  .paws {
    position: absolute;
    right: 128px;
    bottom: 84px;
  }

  .mark {
    position: absolute;
    right: 177px;
    bottom: 20px;
    display: grid;
    gap: 2px;
    width: 57px;
    color: #b4b4b4;
    font: 500 20px/28px "Open Sans", sans-serif;
  }

  .mark span {
    padding-left: 3px;
  }

  .mark b {
    font: 700 41px/40px "Liberation Sans", sans-serif;
  }

  .brand {
    position: absolute;
    right: 0;
    bottom: 0;
    display: flex;
    gap: 7px;
    align-items: center;
    width: 200px;
    height: 95px;
    padding-left: 11px;
    box-sizing: border-box;
    background: #213057;
    color: #d0cdcc;
    white-space: nowrap;
  }

  .brand::before {
    position: absolute;
    top: -8px;
    right: 0;
    width: 11px;
    height: 8px;
    border-radius: 11px 0 0 0;
    background: #62c47c;
    content: "";
  }

  .brand-name {
    display: flex;
    gap: 2px;
    align-items: center;
    height: 34px;
    font: 36px/34px Roboto, sans-serif;
  }

  .brand-name span {
    font: 500 27px/34px "Noto Sans CJK SC", sans-serif;
  }

  .brand-url {
    font: 23px/26px "DejaVu Sans", sans-serif;
  }
</style>
